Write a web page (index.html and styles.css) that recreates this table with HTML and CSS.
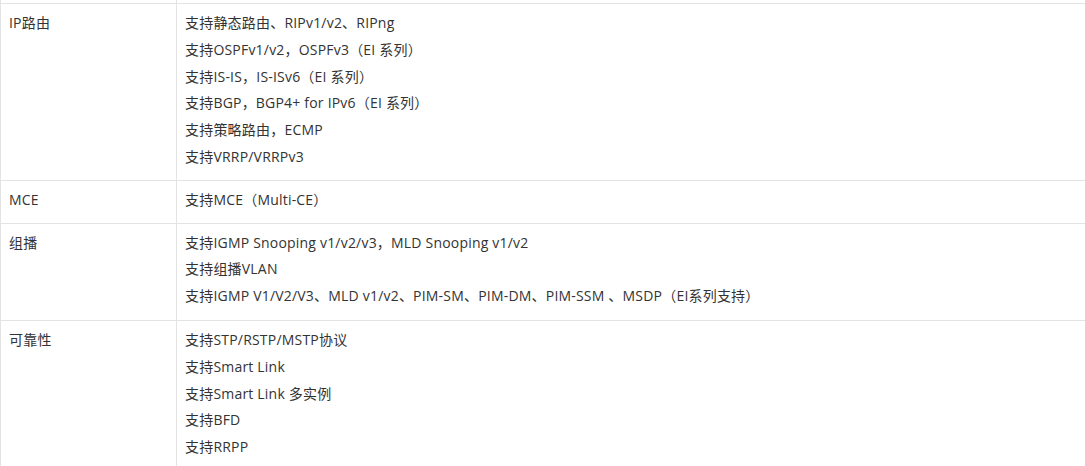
FILE: index.html
```html
<!DOCTYPE html>
<html lang="zh-CN">
<head>
<meta charset="utf-8">
<title>规格</title>
<link rel="stylesheet" href="styles.css">
</head>
<body>
<div class="spec">
  <div class="cell name cut"></div><div class="cell value cut"></div>

  <div class="cell name">IP路由</div>
  <div class="cell value">
    <p>支持静态路由、RIPv1/v2、RIPng</p>
    <p>支持OSPFv1/v2，OSPFv3（EI 系列）</p>
    <p>支持IS-IS，IS-ISv6（EI 系列）</p>
    <p>支持BGP，BGP4+ for IPv6（EI 系列）</p>
    <p>支持策略路由，ECMP</p>
    <p>支持VRRP/VRRPv3</p>
  </div>

  <div class="cell name">MCE</div>
  <div class="cell value">
    <p>支持MCE（Multi-CE）</p>
  </div>

  <div class="cell name loose">组播</div>
  <div class="cell value loose">
    <p>支持IGMP Snooping v1/v2/v3，MLD Snooping v1/v2</p>
    <p>支持组播VLAN</p>
    <p>支持IGMP V1/V2/V3、MLD v1/v2、PIM-SM、PIM-DM、PIM-SSM 、MSDP（EI系列支持）</p>
  </div>

  <div class="cell name">可靠性</div>
  <div class="cell value">
    <p>支持STP/RSTP/MSTP协议</p>
    <p>支持Smart Link</p>
    <p>支持Smart Link 多实例</p>
    <p>支持BFD</p>
    <p>支持RRPP</p>
  </div>
</div>
</body>
</html>
```
FILE: styles.css
```css
html, body {
  margin: 0;
  padding: 0;
  background: #ffffff;
  overflow: hidden;
}

body {
  font-family: "Open Sans", "Noto Sans CJK SC", sans-serif;
  font-size: 14px;
  letter-spacing: 0.2px;
  color: #333333;
}

.spec {
  display: grid;
  grid-template-columns: 176px 1fr;
  width: 1100px;
  border-left: 1px solid #e3e3e3;
}

.cell {
  border-bottom: 1px solid #e3e3e3;
  padding: 6px 8px 9px 8px;
  line-height: 26.8px;
}

.cell.loose {
  padding-bottom: 10px;
}

.cell.name {
  border-right: 1px solid #e3e3e3;
}

.cell.cut {
  height: 3px;
  padding: 0;
}

.value p {
  margin: 0;
}
```
